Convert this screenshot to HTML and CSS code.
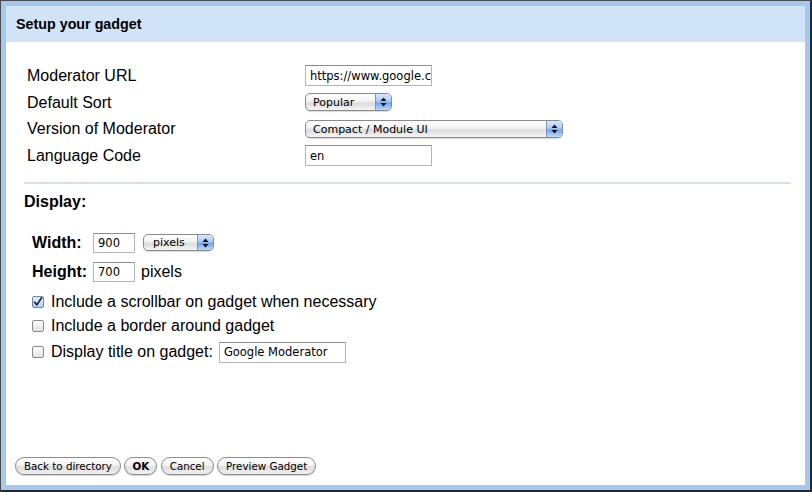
FILE: index.html
```
<!DOCTYPE html>
<html>
<head>
<meta charset="utf-8">
<link rel="stylesheet" href="styles.css">
</head>
<body>
<div class="frame">
  <div class="panel">
    <div class="header">Setup your gadget</div>
    <div class="main">
      <div class="grid">
        <div class="label">Moderator URL</div>
        <div class="ctl"><input class="text url" type="text" value="https://www.google.com/moderator/"></div>
        <div class="label">Default Sort</div>
        <div class="ctl">
          <div class="select sel-sort"><span class="sel-text">Popular</span><span class="sel-arrows"><svg width="7" height="10" viewBox="0 0 7 10"><path d="M3.5 0.5 L6.5 4 L0.5 4 Z M0.5 6 L6.5 6 L3.5 9.5 Z" fill="#111"/></svg></span></div>
        </div>
        <div class="label">Version of Moderator</div>
        <div class="ctl">
          <div class="select sel-version"><span class="sel-text">Compact / Module UI</span><span class="sel-arrows"><svg width="7" height="10" viewBox="0 0 7 10"><path d="M3.5 0.5 L6.5 4 L0.5 4 Z M0.5 6 L6.5 6 L3.5 9.5 Z" fill="#111"/></svg></span></div>
        </div>
        <div class="label">Language Code</div>
        <div class="ctl"><input class="text lang" type="text" value="en"></div>
      </div>
      <div class="sep"></div>
      <div class="section-title">Display:</div>
      <div class="dims">
        <div class="dim-row">
          <span class="dim-label">Width:</span>
          <input class="text num" type="text" value="900">
          <div class="select sel-unit"><span class="sel-text">pixels</span><span class="sel-arrows"><svg width="7" height="10" viewBox="0 0 7 10"><path d="M3.5 0.5 L6.5 4 L0.5 4 Z M0.5 6 L6.5 6 L3.5 9.5 Z" fill="#111"/></svg></span></div>
        </div>
        <div class="dim-row">
          <span class="dim-label">Height:</span>
          <input class="text num" type="text" value="700">
          <span class="unit">pixels</span>
        </div>
      </div>
      <div class="options">
        <div class="opt-row">
          <span class="cb checked"><svg width="12" height="12" viewBox="0 0 12 12"><path d="M2.6 6.2 L4.9 8.9 L9.6 1.8" fill="none" stroke="#1d2a3a" stroke-width="1.7" stroke-linecap="round" stroke-linejoin="round"/></svg></span>
          <span class="opt-text">Include a scrollbar on gadget when necessary</span>
        </div>
        <div class="opt-row">
          <span class="cb"></span>
          <span class="opt-text">Include a border around gadget</span>
        </div>
        <div class="opt-row opt-last">
          <span class="cb"></span>
          <span class="opt-text">Display title on gadget:</span>
          <input class="text title" type="text" value="Google Moderator">
        </div>
      </div>
    </div>
    <div class="buttons">
      <button class="btn">Back to directory</button>
      <button class="btn btn-ok">OK</button>
      <button class="btn">Cancel</button>
      <button class="btn">Preview Gadget</button>
    </div>
  </div>
</div>
</body>
</html>
```
FILE: styles.css
```
html, body {
  margin: 0;
  padding: 0;
  background: #fff;
}
body {
  width: 812px;
  height: 492px;
  font-family: "Liberation Sans", Arial, Helvetica, sans-serif;
  color: #000;
}
.frame {
  box-sizing: border-box;
  width: 812px;
  height: 492px;
  border: 1px solid #4a4a4a;
  border-right: 2px solid #2a2a2a;
  border-bottom: 2px solid #2a2a2a;
}
.panel {
  box-sizing: border-box;
  height: 100%;
  border: 5px solid #a4c8ee;
  display: flex;
  flex-direction: column;
  background: #fff;
}
.header {
  height: 36px;
  flex: none;
  background: #d0e3f7;
  font-weight: bold;
  font-size: 14.3px;
  line-height: 37px;
  padding-left: 10px;
}
.main {
  flex: 1;
  padding-left: 18px;
  padding-right: 15px;
}
.grid {
  display: grid;
  grid-template-columns: 278px auto;
  grid-template-rows: 27px 26px 27px 27px;
  margin-top: 20px;
  margin-left: 3px;
}
.label {
  font-size: 16px;
  line-height: 27px;
}
.ctl {
  display: flex;
  align-items: center;
}
input.text {
  box-sizing: border-box;
  height: 21px;
  border: 1px solid #b4b4b4;
  border-top-color: #8e8e8e;
  background: #fff;
  font-family: "DejaVu Sans", sans-serif;
  font-size: 11.5px;
  color: #000;
  padding: 0 0 0 4px;
  margin: 0;
  outline: none;
}
input.url, input.lang {
  width: 127px;
}
.select {
  box-sizing: border-box;
  height: 18px;
  display: flex;
  align-items: stretch;
  border: 1px solid #8a8a8a;
  border-radius: 5px;
  background: linear-gradient(#ffffff 0%, #f4f4f4 40%, #dcdcdc 60%, #f6f6f6 100%);
  box-shadow: 0 1px 1px rgba(0,0,0,0.15);
  overflow: hidden;
  font-family: "DejaVu Sans", sans-serif;
  font-size: 11px;
}
.sel-text {
  flex: 1;
  padding-left: 7px;
  line-height: 17px;
  white-space: nowrap;
}
.sel-arrows {
  width: 15px;
  display: flex;
  align-items: center;
  justify-content: center;
  border-left: 1px solid #7d95b8;
  background: linear-gradient(#d7e8fc 0%, #a9cdf7 45%, #6fa6ea 55%, #b9dafc 100%);
}
.sel-sort { width: 87px; }
.sel-version { width: 258px; }
.sel-unit { width: 71px; height: 17px; }
.sel-unit .sel-text { line-height: 16px; padding-left: 9px; }
.sep {
  height: 2px;
  background: #cfe1f5;
  margin-top: 13px;
}
.section-title {
  font-weight: bold;
  font-size: 16px;
  line-height: 20px;
  margin-top: 8px;
}
.dims {
  margin-top: 16px;
  margin-left: 8px;
}
.dim-row {
  height: 29px;
  display: flex;
  align-items: center;
  font-size: 16px;
}
.dim-label {
  width: 61px;
  font-weight: bold;
}
input.num {
  width: 42px;
  height: 20px;
}
.sel-unit {
  margin-left: 8px;
}
.unit {
  margin-left: 6px;
}
.options {
  margin-left: 8px;
  margin-top: 4px;
}
.opt-row {
  height: 24px;
  display: flex;
  align-items: center;
  font-size: 16px;
}
.opt-last {
  height: 28px;
}
.cb {
  box-sizing: border-box;
  width: 12px;
  height: 12px;
  border: 1px solid #8a8a8a;
  border-radius: 2px;
  background: linear-gradient(#ffffff, #e2e2e2);
  margin-right: 7px;
  flex: none;
  position: relative;
}
.cb.checked {
  background: linear-gradient(#e4effb, #b7d2f0);
  border-color: #6f86a6;
}
.cb svg {
  position: absolute;
  left: -1px;
  top: -1px;
}
input.title {
  width: 127px;
  height: 21px;
  margin-left: 6px;
}
.buttons {
  flex: none;
  display: flex;
  gap: 3.5px;
  padding-left: 9px;
  padding-bottom: 10px;
}
.btn {
  box-sizing: border-box;
  height: 18px;
  margin: 0;
  padding: 0 8px;
  border: 1px solid #8c8c8c;
  border-radius: 9px;
  background: linear-gradient(#ffffff 0%, #f3f3f3 45%, #dedede 55%, #f0f0f0 100%);
  box-shadow: 0 1px 1px rgba(0,0,0,0.18);
  font-family: "DejaVu Sans", sans-serif;
  font-size: 10.3px;
  line-height: 16px;
  color: #000;
}
.btn-ok {
  font-weight: bold;
  padding: 0 7px;
}
```
